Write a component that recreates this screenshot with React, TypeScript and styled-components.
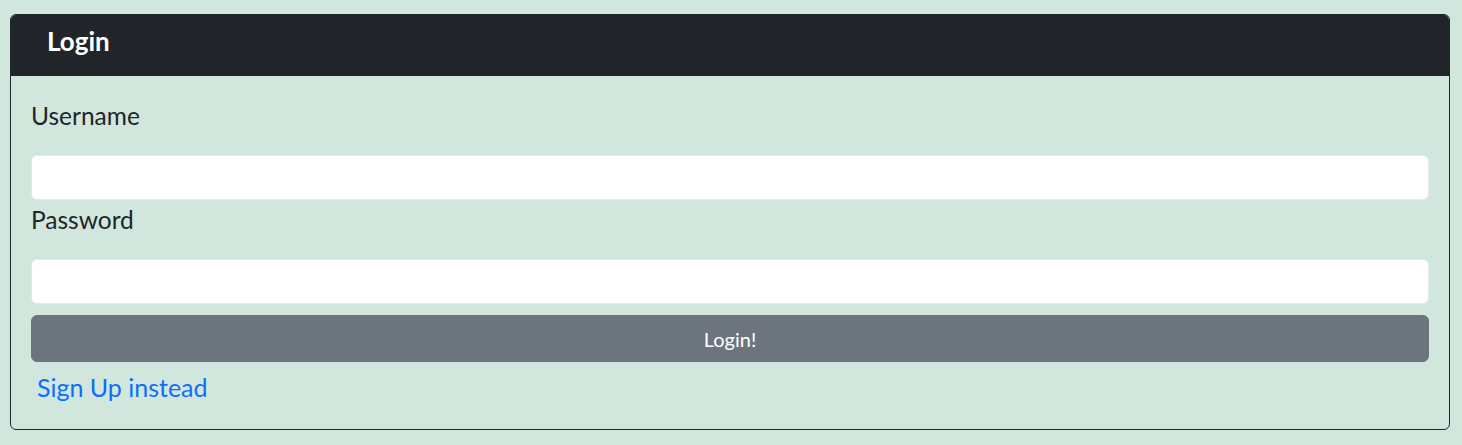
import styled, { createGlobalStyle } from "styled-components";

const GlobalStyle = createGlobalStyle`
  html, body {
    margin: 0;
    padding: 0;
    background: #d1e7dd;
  }
  body {
    font-family: "Segoe UI", Lato, "Liberation Sans", sans-serif;
    color: #212529;
  }
  * {
    box-sizing: border-box;
  }
`;

const App = () => {
  return (
    <Page>
      <GlobalStyle />
      <Card>
        <CardHeader>
          <Title>Login</Title>
        </CardHeader>
        <CardBody>
          <Label htmlFor="username">Username</Label>
          <Input id="username" type="text" />
          <Label htmlFor="password">Password</Label>
          <Input id="password" type="password" $last />
          <SubmitButton type="button">Login!</SubmitButton>
          <SignUpLink href="#">Sign Up instead</SignUpLink>
        </CardBody>
      </Card>
    </Page>
  );
};

const Page = styled.div`
  width: 100%;
  padding: 14px 12px 15px 10px;
`;

const Card = styled.div`
  display: flex;
  flex-direction: column;
  border: 1px solid #212529;
  border-radius: 6px;
  overflow: hidden;
`;

const CardHeader = styled.div`
  height: 61px;
  display: flex;
  align-items: center;
  padding: 0 36px 9px;
  background: #212529;
`;

const Title = styled.h4`
  margin: 0;
  font-size: 26px;
  font-weight: 700;
  line-height: 1;
  color: #ffffff;
`;

const CardBody = styled.div`
  display: flex;
  flex-direction: column;
  padding: 22px 20px 24px 20px;
`;

const Label = styled.label`
  height: 36px;
  line-height: 36px;
  font-size: 24.5px;
  color: #212529;
  margin-bottom: 21px;
`;

const Input = styled.input<{ $last?: boolean }>`
  height: 45px;
  width: 100%;
  margin: 0 0 ${(p) => (p.$last ? "11px" : "2px")};
  padding: 6px 12px;
  font-size: 20px;
  background: #ffffff;
  border: 1px solid #e3ebe7;
  border-radius: 6px;
  outline: none;
`;

const SubmitButton = styled.button`
  height: 47px;
  width: 100%;
  margin-bottom: 7px;
  padding: 0;
  font-family: inherit;
  font-size: 20px;
  color: #ffffff;
  background: #6c757d;
  border: 1px solid #6c757d;
  border-radius: 6px;
  cursor: pointer;
`;

const SignUpLink = styled.a`
  align-self: flex-start;
  height: 36px;
  line-height: 36px;
  padding-left: 6px;
  font-size: 25px;
  color: #0d6efd;
  text-decoration: none;
`;

export default App;
